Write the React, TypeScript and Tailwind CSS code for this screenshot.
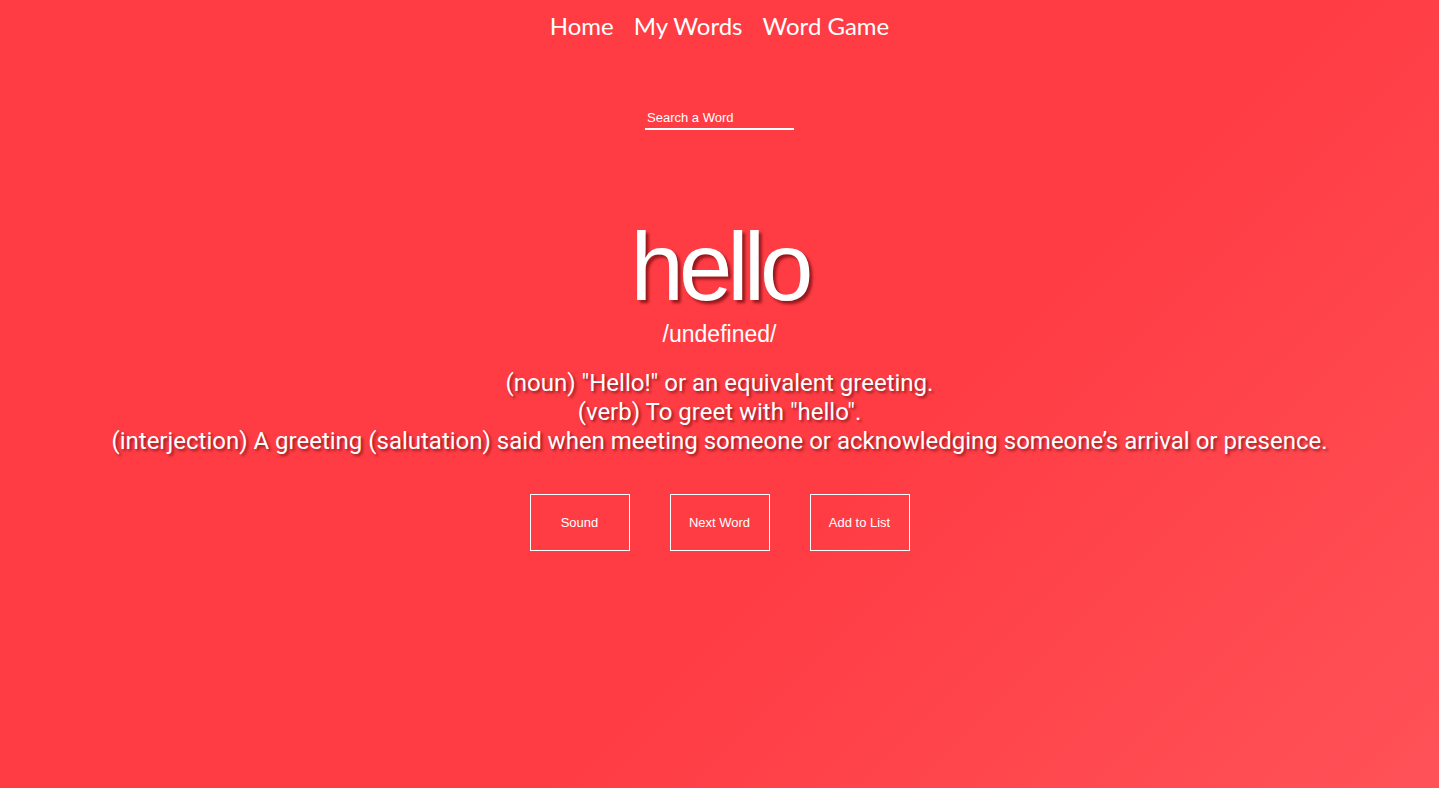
import React from "react";

export default function App() {
  return (
    <div className="min-h-[788px] w-full bg-[linear-gradient(135deg,#ff3c44_0%,#ff3c44_60%,#ff5258_100%)] text-white flex flex-col items-center">
      <nav className="flex gap-[20px] pt-[10px] text-[24px] leading-[32px] font-['Lato','Open_Sans',sans-serif]">
        <a>Home</a>
        <a>My Words</a>
        <a>Word Game</a>
      </nav>
      <div className="mt-[62px] w-[149px] border-b-2 border-white">
        <input
          placeholder="Search a Word"
          className="w-full bg-transparent outline-none px-[2px] text-[13px] leading-[16px] text-white placeholder:text-white font-['Liberation_Sans',Arial,sans-serif]"
        />
      </div>
      <h1 className="mt-[89px] text-[96px] leading-[96px] tracking-[-5px] font-['Liberation_Sans',Arial,sans-serif] [text-shadow:3px_3px_3px_rgba(80,0,0,0.6)]">
        hello
      </h1>
      <div className="mt-[5px] text-[23px] leading-[28px] font-light font-['Liberation_Sans',Arial,sans-serif]">
        /undefined/
      </div>
      <div className="mt-[21px] text-center text-[24px] leading-[29px] font-['Roboto',sans-serif] [text-shadow:2px_2px_3px_rgba(80,0,0,0.6)]">
        <p>(noun) "Hello!" or an equivalent greeting.</p>
        <p>(verb) To greet with "hello".</p>
        <p>(interjection) A greeting (salutation) said when meeting someone or acknowledging someone’s arrival or presence.</p>
      </div>
      <div className="mt-[38px] flex gap-[40px] font-['Liberation_Sans',Arial,sans-serif] text-[13px]">
        <button className="w-[100px] h-[57px] border border-white">Sound</button>
        <button className="w-[100px] h-[57px] border border-white">Next Word</button>
        <button className="w-[100px] h-[57px] border border-white">Add to List</button>
      </div>
    </div>
  );
}
